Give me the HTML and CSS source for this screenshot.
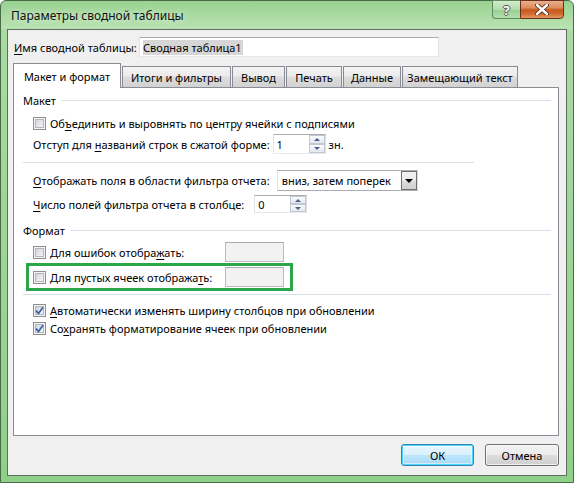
FILE: index.html
```html
<!DOCTYPE html>
<html lang="ru">
<head>
    <meta charset="UTF-8">
    <title>Параметры сводной таблицы</title>
    <link rel="stylesheet" href="styles.css">
</head>
<body>
    <div class="window">
        <div class="titlebar">
            <span class="title">Параметры сводной таблицы</span>
            <div class="caption-buttons">
                <div class="cap-btn help">?</div>
                <div class="cap-btn close">
                    <svg width="14" height="11" viewBox="0 0 14 11">
                        <path d="M2 1 L12 10 M12 1 L2 10" stroke="#5a2a18" stroke-width="4.2" stroke-linecap="round"/>
                        <path d="M2 1 L12 10 M12 1 L2 10" stroke="#fff" stroke-width="2.4" stroke-linecap="round"/>
                    </svg>
                </div>
            </div>
        </div>

        <div class="client">
            <div class="name-row">
                <span class="name-label"><u>И</u>мя сводной таблицы:</span>
                <div class="name-input"><span class="selected">Сводная таблица1</span></div>
            </div>

            <div class="tabs">
                <div class="tab active w-layout">Макет и формат</div>
                <div class="tab w-totals">Итоги и фильтры</div>
                <div class="tab w-output">Вывод</div>
                <div class="tab w-print">Печать</div>
                <div class="tab w-data">Данные</div>
                <div class="tab w-alt">Замещающий текст</div>
            </div>

            <div class="panel">
                <div class="group-head"><span>Макет</span><i class="line"></i></div>

                <div class="row cb-row first">
                    <span class="checkbox"></span>
                    <span>Об<u>ъ</u>единить и выровнять по центру ячейки с подписями</span>
                </div>

                <div class="row spin-row">
                    <span>Отступ для <u>н</u>азваний строк в сжатой форме:</span>
                    <div class="spin">
                        <span class="spin-val">1</span>
                        <span class="spin-btns"><i class="up"></i><i class="down"></i></span>
                    </div>
                    <span class="unit">зн.</span>
                </div>

                <div class="sep short"></div>

                <div class="row drop-row">
                    <span><u>О</u>тображать поля в области фильтра отчета:</span>
                    <div class="dropdown">
                        <span class="drop-val">вниз, затем поперек</span>
                        <span class="drop-btn"><i></i></span>
                    </div>
                </div>

                <div class="row count-row">
                    <span><u>Ч</u>исло полей фильтра отчета в столбце:</span>
                    <div class="spin small">
                        <span class="spin-val">0</span>
                        <span class="spin-btns"><i class="up"></i><i class="down"></i></span>
                    </div>
                </div>

                <div class="group-head format-head"><span>Формат</span><i class="line"></i></div>

                <div class="row fmt-row errors">
                    <span class="checkbox"></span>
                    <span class="fmt-label">Для ошибок отобра<u>ж</u>ать:</span>
                    <span class="fmt-box"></span>
                </div>

                <div class="highlight">
                    <div class="row fmt-row">
                        <span class="checkbox"></span>
                        <span class="fmt-label">Для пустых ячеек отобража<u>т</u>ь:</span>
                        <span class="fmt-box"></span>
                    </div>
                </div>

                <div class="sep wide"></div>

                <div class="row cb-row auto">
                    <span class="checkbox checked">
                        <svg width="9" height="9" viewBox="0 0 9 9"><path d="M1 4.6 L3.5 7.4 L8 1.2" fill="none" stroke="#3461a8" stroke-width="1.7"/></svg>
                    </span>
                    <span><u>А</u>втоматически изменять ширину столбцов при обновлении</span>
                </div>

                <div class="row cb-row keep">
                    <span class="checkbox checked">
                        <svg width="9" height="9" viewBox="0 0 9 9"><path d="M1 4.6 L3.5 7.4 L8 1.2" fill="none" stroke="#3461a8" stroke-width="1.7"/></svg>
                    </span>
                    <span>Со<u>х</u>ранять форматирование ячеек при обновлении</span>
                </div>
            </div>

            <div class="buttons">
                <div class="button default">ОК</div>
                <div class="button">Отмена</div>
            </div>
        </div>
    </div>
</body>
</html>
```

FILE: styles.css
```css
body {
    margin: 0;
    font-family: "Noto Sans", "Open Sans", sans-serif;
    font-size: 11px;
    color: #000;
}
u {
    text-decoration-thickness: 1px;
    text-underline-offset: 2px;
}

/* window frame */
.window {
    width: 574px;
    height: 483px;
    box-sizing: border-box;
    border: 1px solid #4a6b48;
    border-radius: 6px 6px 0 0;
    background: linear-gradient(to bottom, #98d290 0, #b9e2b2 27px, #a9dba2 30px, #8fd088 100%);
    display: flex;
    flex-direction: column;
}
.titlebar {
    height: 28px;
    display: flex;
    justify-content: space-between;
    align-items: flex-start;
}
.title {
    margin: 6px 0 0 10px;
    font-size: 12px;
    color: #111;
    text-shadow: 0 0 6px rgba(255,255,255,0.8);
}
.caption-buttons {
    display: flex;
    margin: -1px 9px 0 0;
}
.cap-btn {
    height: 19px;
    box-sizing: border-box;
    display: flex;
    align-items: center;
    justify-content: center;
}
.help {
    width: 28px;
    border: 1px solid #5d8a5a;
    border-right: none;
    border-radius: 0 0 0 4px;
    background: linear-gradient(to bottom, #d2ebcc 0, #b2dcab 50%, #98cf90 52%, #b4deae 100%);
    color: #fff;
    font-weight: bold;
    font-size: 13px;
    text-shadow: 1px 0 0 #555, -1px 0 0 #555, 0 1px 0 #555, 0 -1px 0 #555;
}
.close {
    width: 44px;
    border: 1px solid #6a2f1c;
    border-radius: 0 0 4px 0;
    background: linear-gradient(to bottom, #e8b08f 0, #dc8d5c 40%, #c8581e 52%, #d06a30 75%, #e49a62 100%);
}

/* client area */
.client {
    flex: 1;
    margin: 0 6px 6px;
    border: 1px solid #5f6d5e;
    background: #f0f0f0;
    display: flex;
    flex-direction: column;
}
.name-row {
    display: flex;
    align-items: center;
    margin: 7px 0 0 6px;
    height: 20px;
}
.name-label {
    width: 125px;
    white-space: nowrap;
}
.name-input {
    width: 300px;
    height: 20px;
    box-sizing: border-box;
    border: 1px solid #abadb3;
    border-left-color: #e2e3ea;
    border-right-color: #e2e3ea;
    border-bottom-color: #e3e9ef;
    background: #fff;
    display: flex;
    align-items: center;
    padding-left: 3px;
}
.selected {
    background: #d6d6d6;
    line-height: 15px;
    padding-right: 1px;
}

/* tabs */
.tabs {
    display: flex;
    align-items: flex-end;
    margin: 6px 0 -1px 5px;
    height: 25px;
    position: relative;
    z-index: 1;
}
.tab {
    height: 21px;
    box-sizing: border-box;
    margin: 0 0 1px 1px;
    border: 1px solid #898c95;
    border-bottom: none;
    background: linear-gradient(to bottom, #f3f3f3 0, #ebebeb 45%, #dddddd 50%, #d2d2d2 100%);
    display: flex;
    align-items: center;
    justify-content: center;
    white-space: nowrap;
}
.tab.active {
    height: 25px;
    margin: 0;
    background: #fff;
}
.w-layout { width: 108px; }
.w-totals { width: 109px; }
.w-output { width: 53px; }
.w-print { width: 56px; }
.w-data { width: 58px; }
.w-alt { width: 116px; }

.panel {
    height: 349px;
    box-sizing: border-box;
    margin: 0 7px 0 5px;
    border: 1px solid #898c95;
    background: #fff;
    padding: 5px 0 0 9px;
}

/* panel contents */
.group-head {
    display: flex;
    align-items: center;
    height: 14px;
    margin-right: 7px;
}
.group-head .line {
    flex: 1;
    height: 1px;
    margin-left: 6px;
    background: #d5dfe5;
}
.format-head {
    margin-top: 10px;
}
.row {
    display: flex;
    align-items: center;
    margin-left: 10px;
}
.cb-row {
    height: 14px;
    margin-top: 4px;
}
.cb-row.first {
    margin-top: 9px;
}
.cb-row.auto {
    margin-top: 8px;
}
.checkbox {
    width: 13px;
    height: 13px;
    box-sizing: border-box;
    flex-shrink: 0;
    margin-right: 4px;
    border: 1px solid #8e8f8f;
    background: linear-gradient(135deg, #cbced3 0, #eef0f2 70%, #f7f7f7 100%);
    box-shadow: inset 0 0 0 1px #f4f4f4, inset 0 0 0 2px #b3b7bd;
    display: flex;
    align-items: center;
    justify-content: center;
}
.sep {
    height: 1px;
    background: #d5dfe5;
}
.sep.short {
    width: 451px;
    margin-top: 8px;
}
.sep.wide {
    margin: 3px 7px 0 0;
}

.spin-row {
    height: 20px;
    margin-top: 4px;
}
.spin {
    width: 53px;
    height: 20px;
    box-sizing: border-box;
    margin-left: 3px;
    border: 1px solid #abadb3;
    border-left-color: #e2e3ea;
    border-right-color: #dbdfe6;
    border-bottom-color: #e3e9ef;
    background: #fff;
    display: flex;
}
.spin.small {
    height: 18px;
    margin-left: 10px;
}
.spin-val {
    flex: 1;
    padding-left: 3px;
    display: flex;
    align-items: center;
}
.spin-btns {
    width: 16px;
    display: flex;
    flex-direction: column;
}
.spin-btns i {
    flex: 1;
    box-sizing: border-box;
    border: 1px solid #c2c8d1;
    background: linear-gradient(to bottom, #fbfcfd, #e3e8ef);
    position: relative;
}
.spin-btns i::after {
    content: "";
    position: absolute;
    left: 4px;
    top: 2px;
    border-left: 3px solid transparent;
    border-right: 3px solid transparent;
}
.spin-btns .up::after {
    border-bottom: 3px solid #4d6185;
}
.spin-btns .down::after {
    border-top: 3px solid #4d6185;
}
.unit {
    margin-left: 3px;
}

.drop-row {
    height: 21px;
    margin-top: 7px;
}
.dropdown {
    width: 141px;
    height: 21px;
    box-sizing: border-box;
    margin-left: 7px;
    border: 1px solid #abadb3;
    border-left-color: #e2e3ea;
    border-right-color: #dbdfe6;
    background: #fff;
    display: flex;
}
.drop-val {
    flex: 1;
    padding-left: 4px;
    display: flex;
    align-items: center;
    white-space: nowrap;
}
.drop-btn {
    width: 16px;
    box-sizing: border-box;
    border: 1px solid #707070;
    background: linear-gradient(to bottom, #f2f2f2 0, #ebebeb 50%, #dddddd 51%, #cfcfcf 100%);
    display: flex;
    align-items: center;
    justify-content: center;
}
.drop-btn i {
    border-left: 4px solid transparent;
    border-right: 4px solid transparent;
    border-top: 4px solid #000;
}
.count-row {
    height: 18px;
    margin-top: 4px;
}

.fmt-row {
    height: 20px;
}
.fmt-row.errors {
    margin-top: 5px;
}
.fmt-label {
    width: 175px;
}
.fmt-box {
    width: 59px;
    height: 20px;
    box-sizing: border-box;
    border: 1px solid #b9bcc0;
    border-top-color: #a9acb0;
    background: #f2f2f2;
}
.highlight {
    width: 267px;
    height: 28px;
    box-sizing: border-box;
    margin: 1px 0 0 3px;
    border: 3px solid #2ca64a;
    padding-top: 1px;
}
.highlight .row {
    margin-left: 4px;
}

/* dialog buttons */
.buttons {
    display: flex;
    justify-content: flex-end;
    gap: 11px;
    margin: 8px 7px 0 0;
}
.button {
    width: 73px;
    height: 22px;
    box-sizing: border-box;
    border: 1px solid #707070;
    border-radius: 3px;
    background: linear-gradient(to bottom, #f2f2f2 0, #ebebeb 50%, #dddddd 51%, #cfcfcf 100%);
    box-shadow: inset 0 0 0 1px rgba(255,255,255,0.7);
    display: flex;
    align-items: center;
    justify-content: center;
}
.button.default {
    border-color: #3c7fb1;
    box-shadow: inset 0 0 0 1px #48d8fd, inset 0 0 0 2px rgba(255,255,255,0.5);
    background: linear-gradient(to bottom, #eaf6fd 0, #d9f0fc 50%, #bee6fd 51%, #a7d9f5 100%);
}
.button + .button {
    width: 74px;
}
```
